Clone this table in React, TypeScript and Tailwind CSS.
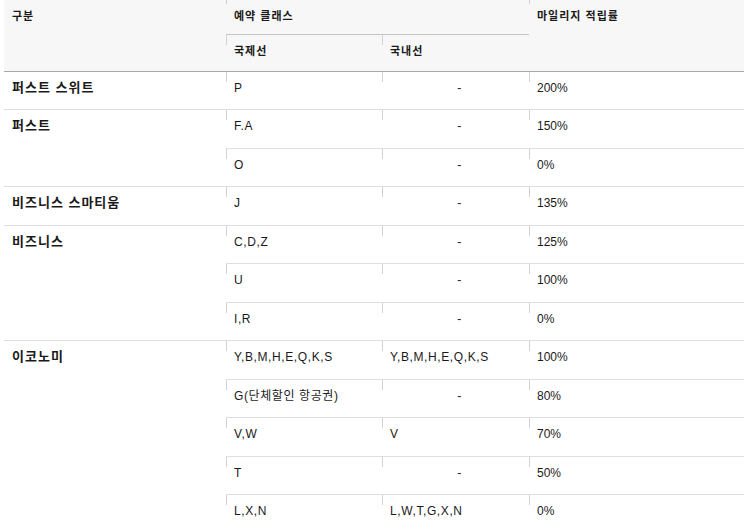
// Mileage accrual table: fare classes per cabin and their accrual rate.

type Item = { intl: string; dom: string; rate: string };
type Group = { grade: string; items: Item[] };

const groups: Group[] = [
  { grade: "퍼스트 스위트", items: [{ intl: "P", dom: "-", rate: "200%" }] },
  {
    grade: "퍼스트",
    items: [
      { intl: "F.A", dom: "-", rate: "150%" },
      { intl: "O", dom: "-", rate: "0%" },
    ],
  },
  { grade: "비즈니스 스마티움", items: [{ intl: "J", dom: "-", rate: "135%" }] },
  {
    grade: "비즈니스",
    items: [
      { intl: "C,D,Z", dom: "-", rate: "125%" },
      { intl: "U", dom: "-", rate: "100%" },
      { intl: "I,R", dom: "-", rate: "0%" },
    ],
  },
  {
    grade: "이코노미",
    items: [
      { intl: "Y,B,M,H,E,Q,K,S", dom: "Y,B,M,H,E,Q,K,S", rate: "100%" },
      { intl: "G(단체할인 항공권)", dom: "-", rate: "80%" },
      { intl: "V,W", dom: "V", rate: "70%" },
      { intl: "T", dom: "-", rate: "50%" },
      { intl: "L,X,N", dom: "L,W,T,G,X,N", rate: "0%" },
    ],
  },
];

// short grey tick on the left edge of a cell (the table's column marker)
const tick =
  "relative before:content-[''] before:absolute before:left-0 before:top-0 before:h-[10px] before:w-px before:bg-[#d2d2d2]";
const topTick =
  "relative before:content-[''] before:absolute before:left-0 before:top-0 before:h-[4px] before:w-px before:bg-[#d2d2d2]";

const bodyCell = `${tick} h-[38.5px] border-b border-[#dedede] pl-2 pt-[7px] align-top`;
const headText = "text-[11px] tracking-[1px] font-bold text-left align-top";

export default function App() {
  return (
    <div className="min-h-screen bg-white text-[12px] leading-[18px] text-[#1a1a1a] font-['Liberation_Sans','Noto_Sans_CJK_KR',sans-serif]">
      <table className="ml-1 w-[740px] table-fixed border-separate border-spacing-0">
        <colgroup>
          <col className="w-[222px]" />
          <col className="w-[156px]" />
          <col className="w-[147px]" />
          <col className="w-[215px]" />
        </colgroup>
        <thead className="bg-[#f7f7f7]">
          <tr>
            <th rowSpan={2} className={`${headText} border-b border-[#a8a8a8] pl-2 pt-[7px]`}>
              구분
            </th>
            <th colSpan={2} className={`${headText} ${topTick} h-[34px] pl-2 pt-[7px]`}>
              예약 클래스
            </th>
            <th
              rowSpan={2}
              className={`${headText} ${topTick} border-b border-[#a8a8a8] pl-2 pt-[7px]`}
            >
              마일리지 적립률
            </th>
          </tr>
          <tr>
            <th
              className={`${headText} ${tick} h-[37.5px] border-t border-b border-t-[#c4c4c4] border-b-[#a8a8a8] pl-2 pt-[7px]`}
            >
              국제선
            </th>
            <th
              className={`${headText} ${tick} border-t border-b border-t-[#c4c4c4] border-b-[#a8a8a8] pl-2 pt-[7px]`}
            >
              국내선
            </th>
          </tr>
        </thead>
        <tbody>
          {groups.map((g) =>
            g.items.map((it, i) => (
              <tr key={g.grade + i}>
                {i === 0 && (
                  <td
                    rowSpan={g.items.length}
                    className="border-b border-[#dedede] pl-2 pt-[7px] align-top text-[13px] tracking-[1px] font-bold"
                  >
                    {g.grade}
                  </td>
                )}
                <td className={`${bodyCell} tracking-[0.6px]`}>{it.intl}</td>
                <td
                  className={`${bodyCell} tracking-[0.6px] ${it.dom === "-" ? "text-center" : ""}`}
                >
                  {it.dom}
                </td>
                <td className={bodyCell}>{it.rate}</td>
              </tr>
            ))
          )}
        </tbody>
      </table>
    </div>
  );
}
